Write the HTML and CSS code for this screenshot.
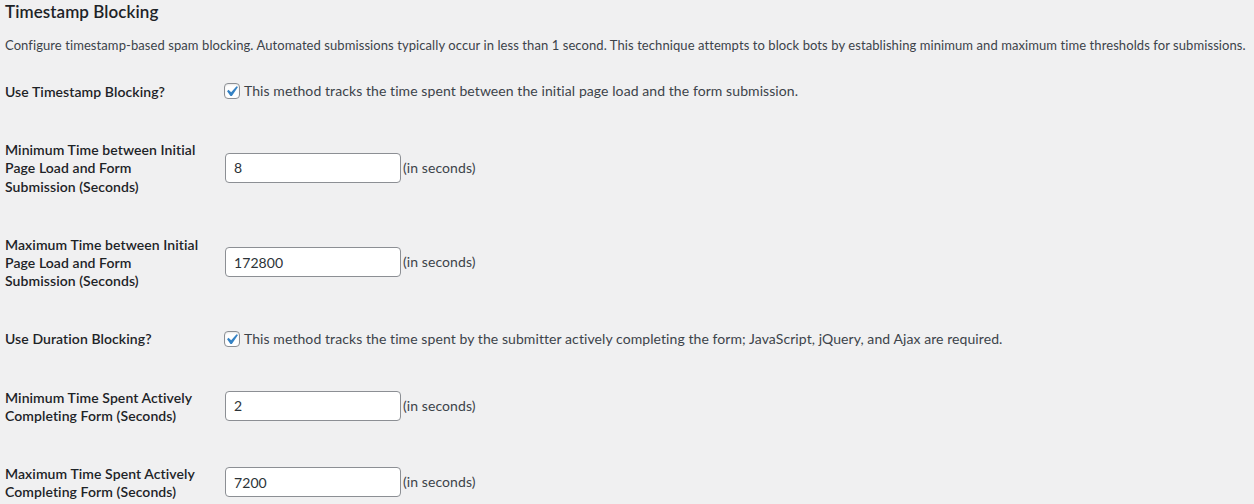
FILE: index.html
```html
<!DOCTYPE html>
<html lang="en">
<head>
<meta charset="utf-8">
<title>Timestamp Blocking</title>
<link rel="stylesheet" href="styles.css">
</head>
<body>
<div class="wrap">
  <h2 class="section-title">Timestamp Blocking</h2>
  <p class="intro">Configure timestamp-based spam blocking. Automated submissions typically occur in less than 1 second. This technique attempts to block bots by establishing minimum and maximum time thresholds for submissions.</p>
  <div class="form-table">
    <div class="row">
      <div class="th">Use Timestamp Blocking?</div>
      <div class="td">
        <label class="check"><span class="box"><svg viewBox="3.81 2.86 13.33 13.33" width="14" height="14"><path d="M14.83 4.89l1.34.94-5.81 8.38H9.02L5.78 9.67l1.34-1.25 2.57 2.4z"/></svg></span>This method tracks the time spent between the initial page load and the form submission.</label>
      </div>
    </div>
    <div class="row">
      <div class="th">Minimum Time between Initial<br>Page Load and Form<br>Submission (Seconds)</div>
      <div class="td"><input class="num" type="text" value="8"><span class="unit">(in seconds)</span></div>
    </div>
    <div class="row">
      <div class="th">Maximum Time between Initial<br>Page Load and Form<br>Submission (Seconds)</div>
      <div class="td"><input class="num" type="text" value="172800"><span class="unit">(in seconds)</span></div>
    </div>
    <div class="row">
      <div class="th">Use Duration Blocking?</div>
      <div class="td">
        <label class="check"><span class="box"><svg viewBox="3.81 2.86 13.33 13.33" width="14" height="14"><path d="M14.83 4.89l1.34.94-5.81 8.38H9.02L5.78 9.67l1.34-1.25 2.57 2.4z"/></svg></span>This method tracks the time spent by the submitter actively completing the form; JavaScript, jQuery, and Ajax are required.</label>
      </div>
    </div>
    <div class="row">
      <div class="th">Minimum Time Spent Actively<br>Completing Form (Seconds)</div>
      <div class="td"><input class="num" type="text" value="2"><span class="unit">(in seconds)</span></div>
    </div>
    <div class="row">
      <div class="th">Maximum Time Spent Actively<br>Completing Form (Seconds)</div>
      <div class="td"><input class="num" type="text" value="7200"><span class="unit">(in seconds)</span></div>
    </div>
  </div>
</div>
</body>
</html>
```
FILE: styles.css
```css
* { box-sizing: border-box; }
html, body {
  margin: 0;
  background: #f0f0f1;
}
body {
  font-family: Lato, "Open Sans", sans-serif;
  color: #3c434a;
  font-size: 13px;
  letter-spacing: 0.08px;
}
.wrap {
  padding: 0 5px;
}
.section-title {
  margin: 0;
  font-size: 17px;
  line-height: 24px;
  font-weight: 600;
  color: #1d2327;
}
.intro {
  margin: 12px 0 0;
  font-size: 13px;
  line-height: 19.5px;
  color: #3c434a;
  white-space: nowrap;
}
.form-table {
  margin-top: 6.5px;
  display: flex;
  flex-direction: column;
}
.row {
  display: grid;
  grid-template-columns: 210px 1fr;
}
.th {
  padding: 21px 10px 19px 0;
  font-size: 14px;
  line-height: 18.2px;
  font-weight: 600;
  color: #1d2327;
  align-self: start;
}
.td {
  padding: 0 10px;
  align-self: center;
  font-size: 14px;
  line-height: 18px;
  display: flex;
  align-items: center;
}
.check {
  display: flex;
  align-items: center;
  color: #3c434a;
  margin-left: -1px;
}
.box {
  width: 16px;
  height: 16px;
  border: 1px solid #8c8f94;
  border-radius: 4px;
  background: #fff;
  margin-right: 4px;
  display: flex;
  box-shadow: inset 0 1px 2px rgba(0,0,0,.1);
}
.box svg {
  fill: #3582c4;
  overflow: visible;
}
.num {
  width: 176px;
  height: 30px;
  margin: 0;
  padding: 0 8px;
  border: 1px solid #8c8f94;
  border-radius: 4px;
  background: #fff;
  font-family: inherit;
  font-size: 14px;
  letter-spacing: inherit;
  color: #2c3338;
}
.unit {
  margin-left: 2px;
  color: #3c434a;
}
```
